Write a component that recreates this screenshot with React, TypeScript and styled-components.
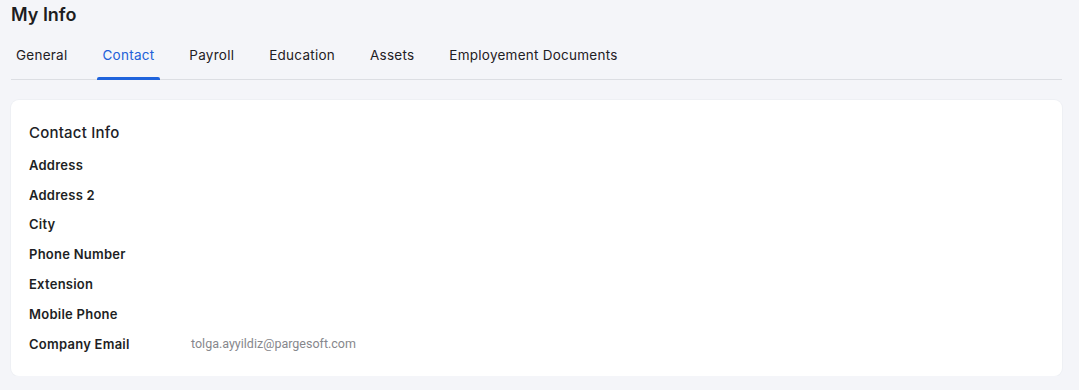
import React, { useState } from "react";
import styled, { createGlobalStyle } from "styled-components";

const GlobalStyle = createGlobalStyle`
  html, body {
    margin: 0;
    padding: 0;
    background: #f4f5f9;
    font-family: Inter, "Open Sans", sans-serif;
  }
`;

const Page = styled.div`
  padding: 4px 17px 0 11px;
`;

const Title = styled.h1`
  margin: 0;
  font-size: 18px;
  line-height: 22px;
  font-weight: 600;
  color: #1d1d21;
`;

const TabBar = styled.div`
  display: flex;
  gap: 24px;
  margin-top: 13px;
  border-bottom: 1px solid #dcdee3;
`;

const Tab = styled.div<{ $active?: boolean }>`
  position: relative;
  padding: 7px 6px 15px 5px;
  font-size: 13.5px;
  line-height: 18px;
  letter-spacing: 0.25px;
  font-weight: 400;
  color: ${(p) => (p.$active ? "#2260d8" : "#1f2024")};
  cursor: pointer;

  &::after {
    content: "";
    display: ${(p) => (p.$active ? "block" : "none")};
    position: absolute;
    left: 0;
    right: 0;
    bottom: -1px;
    height: 3px;
    border-radius: 2px 2px 0 0;
    background: #1f63dc;
  }
`;

const Card = styled.div`
  margin-top: 20px;
  background: #fff;
  border-radius: 8px;
  box-shadow: 0 0 0 1px #eef0f4;
  padding: 23px 18px 17px;
`;

const CardTitle = styled.h2`
  margin: 0 0 7px;
  font-size: 15px;
  line-height: 20px;
  letter-spacing: 0.2px;
  font-weight: 500;
  color: #202126;
`;

const Row = styled.div`
  display: grid;
  grid-template-columns: 162px 1fr;
  align-items: center;
  height: 29.8px;
`;

const Label = styled.div`
  font-size: 13px;
  letter-spacing: 0.25px;
  font-weight: 600;
  color: #1e1f24;
`;

const Value = styled.div`
  font-family: Roboto, "Liberation Sans", sans-serif;
  font-size: 12.5px;
  color: #86878c;
`;

const tabs = ["General", "Contact", "Payroll", "Education", "Assets", "Employement Documents"];

const fields: [string, string][] = [
  ["Address", ""],
  ["Address 2", ""],
  ["City", ""],
  ["Phone Number", ""],
  ["Extension", ""],
  ["Mobile Phone", ""],
  ["Company Email", "tolga.ayyildiz@pargesoft.com"],
];

const App = () => {
  const [active, setActive] = useState("Contact");

  return (
    <>
      <GlobalStyle />
      <Page>
        <Title>My Info</Title>
        <TabBar>
          {tabs.map((t) => (
            <Tab key={t} $active={t === active} onClick={() => setActive(t)}>
              {t}
            </Tab>
          ))}
        </TabBar>
        <Card>
          <CardTitle>Contact Info</CardTitle>
          {fields.map(([label, value]) => (
            <Row key={label}>
              <Label>{label}</Label>
              <Value>{value}</Value>
            </Row>
          ))}
        </Card>
      </Page>
    </>
  );
};

export default App;
